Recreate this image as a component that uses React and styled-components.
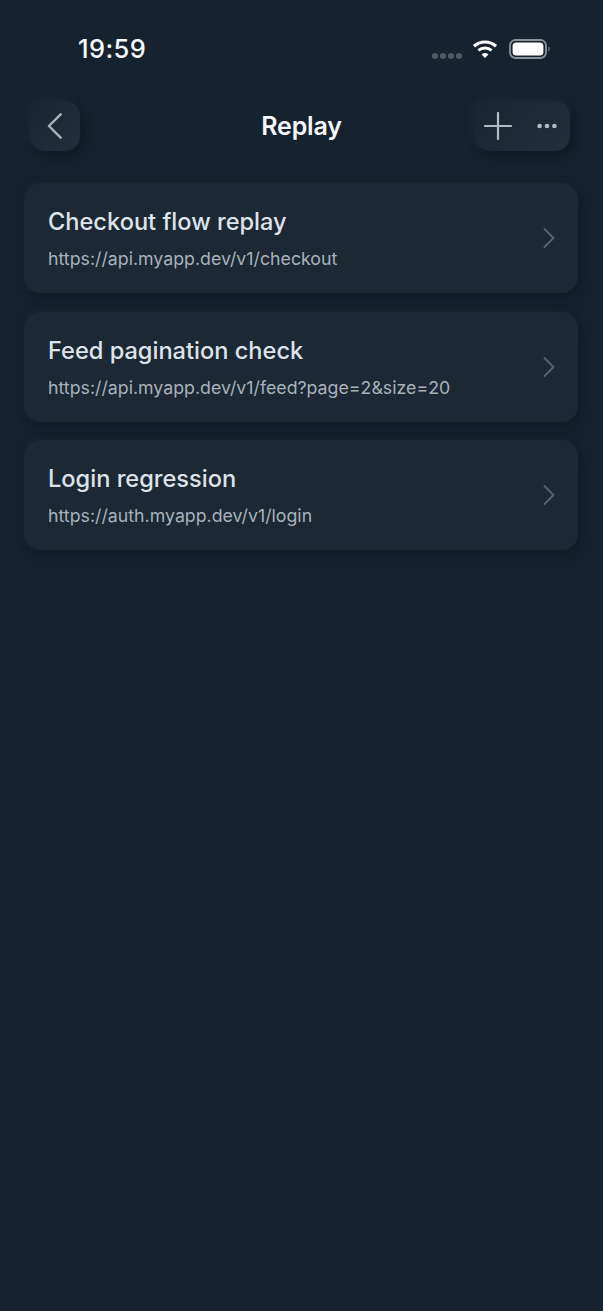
import React from "react";
import styled, { createGlobalStyle } from "styled-components";

const replays = [
  { id: 1, title: "Checkout flow replay", url: "https://api.myapp.dev/v1/checkout" },
  { id: 2, title: "Feed pagination check", url: "https://api.myapp.dev/v1/feed?page=2&size=20" },
  { id: 3, title: "Login regression", url: "https://auth.myapp.dev/v1/login" },
];

const GlobalStyle = createGlobalStyle`
  html, body {
    margin: 0;
    background: #16222e;
  }
  * {
    box-sizing: border-box;
  }
`;

const Screen = styled.div`
  width: 603px;
  height: 1311px;
  overflow: hidden;
  background: #16222e;
  font-family: Inter, "Liberation Sans", sans-serif;
`;

const StatusBar = styled.div`
  height: 98px;
  padding: 33px 52px 0 78px;
  display: flex;
  justify-content: space-between;
  align-items: flex-start;
`;

const Clock = styled.div`
  color: #f7f9fa;
  font-size: 25.5px;
  line-height: 32px;
  font-weight: 500;
  letter-spacing: 0.4px;
`;

const StatusIcons = styled.div`
  display: flex;
  align-items: center;
  gap: 11px;
  height: 32px;
`;

const SignalDots = styled.div`
  display: flex;
  gap: 2px;
  margin-top: 13px;
  margin-right: -1px;
`;

const Dot = styled.span`
  width: 6px;
  height: 6px;
  border-radius: 50%;
  background: #505b66;
`;

const NavBar = styled.header`
  height: 56px;
  padding: 0 33px 0 30px;
  display: flex;
  align-items: center;
  justify-content: space-between;
  position: relative;
`;

const Title = styled.h1`
  position: absolute;
  left: 0;
  right: 0;
  margin: 0;
  text-align: center;
  color: #f4f6f8;
  font-size: 25px;
  font-weight: 600;
  line-height: 56px;
  letter-spacing: -0.2px;
  pointer-events: none;
`;

const NavButton = styled.button`
  height: 50px;
  width: ${(p) => p.$width}px;
  padding: 0;
  border: 0;
  border-radius: 15px;
  background: linear-gradient(135deg, #192530 0%, #222f3b 100%);
  box-shadow: -3px -3px 8px rgba(50, 65, 78, 0.24), 4px 5px 10px rgba(10, 18, 26, 0.4);
  display: flex;
  align-items: center;
  justify-content: center;
`;

const ActionsButton = styled(NavButton)`
  justify-content: flex-start;
  padding-left: 9px;
  gap: 25px;
`;

const List = styled.main`
  padding: 29px 25px 0 24px;
  display: flex;
  flex-direction: column;
  gap: 18.5px;
`;

const Card = styled.div`
  height: 110px;
  padding: 0 23px 0 24px;
  border-radius: 16px;
  background: #1c2834;
  box-shadow: -2px -2px 7px rgba(40, 54, 66, 0.14), 3px 5px 12px rgba(11, 19, 27, 0.36);
  display: flex;
  align-items: center;
  justify-content: space-between;
`;

const CardText = styled.div`
  display: flex;
  flex-direction: column;
  gap: 11px;
  margin-top: 2px;
`;

const CardTitle = styled.div`
  color: #dde3e9;
  font-size: 23.6px;
  line-height: 29px;
  font-weight: 500;
`;

const CardUrl = styled.div`
  color: #a8b2ba;
  font-size: 17.75px;
  line-height: 24px;
  font-weight: 400;
`;

function Wifi() {
  return (
    <svg width="26" height="20" viewBox="0 0 26 20" fill="none">
      <path d="M2 7.2C8.2 1.6 17.8 1.6 24 7.2" stroke="#fff" strokeWidth="3.2" />
      <path d="M6.4 11.4C10.2 8.2 15.8 8.2 19.6 11.4" stroke="#fff" strokeWidth="3.2" />
      <path d="M9.6 15.4L13 19L16.4 15.4C14.4 13.6 11.6 13.6 9.6 15.4Z" fill="#fff" />
    </svg>
  );
}

function Battery() {
  return (
    <svg width="42" height="20" viewBox="0 0 42 20" fill="none">
      <rect x="1" y="1" width="36" height="18" rx="5.5" stroke="#8a929a" strokeWidth="1.8" />
      <rect x="3.6" y="3.6" width="30.8" height="12.8" rx="3.5" fill="#fff" />
      <path d="M39.5 7.5C41 8 41 12 39.5 12.5Z" fill="#8a929a" />
    </svg>
  );
}

function Chevron({ flip, color, size }) {
  return (
    <svg width={size * 0.6} height={size} viewBox="0 0 12 20" fill="none">
      <path
        d={flip ? "M10.5 1L1.5 10L10.5 19" : "M1.5 1L10.5 10L1.5 19"}
        stroke={color}
        strokeWidth="1.9"
        strokeLinecap="round"
        strokeLinejoin="round"
      />
    </svg>
  );
}

function Plus() {
  return (
    <svg width="28" height="28" viewBox="0 0 28 28" fill="none">
      <path d="M14 1V27M1 14H27" stroke="#b4bcc4" strokeWidth="2.2" strokeLinecap="round" />
    </svg>
  );
}

function More() {
  return (
    <svg width="20" height="6" viewBox="0 0 20 6" fill="#b4bcc4">
      <circle cx="2.6" cy="3" r="2.3" />
      <circle cx="10" cy="3" r="2.3" />
      <circle cx="17.4" cy="3" r="2.3" />
    </svg>
  );
}

export default function App() {
  return (
    <Screen>
      <GlobalStyle />
      <StatusBar>
        <Clock>19:59</Clock>
        <StatusIcons>
          <SignalDots>
            <Dot />
            <Dot />
            <Dot />
            <Dot />
          </SignalDots>
          <Wifi />
          <Battery />
        </StatusIcons>
      </StatusBar>
      <NavBar>
        <NavButton $width={50}>
          <Chevron flip color="#a9b2ba" size={26} />
        </NavButton>
        <Title>Replay</Title>
        <ActionsButton $width={95}>
          <Plus />
          <More />
        </ActionsButton>
      </NavBar>
      <List>
        {replays.map((item) => (
          <Card key={item.id}>
            <CardText>
              <CardTitle>{item.title}</CardTitle>
              <CardUrl>{item.url}</CardUrl>
            </CardText>
            <Chevron color="#58636d" size={20} />
          </Card>
        ))}
      </List>
    </Screen>
  );
}
